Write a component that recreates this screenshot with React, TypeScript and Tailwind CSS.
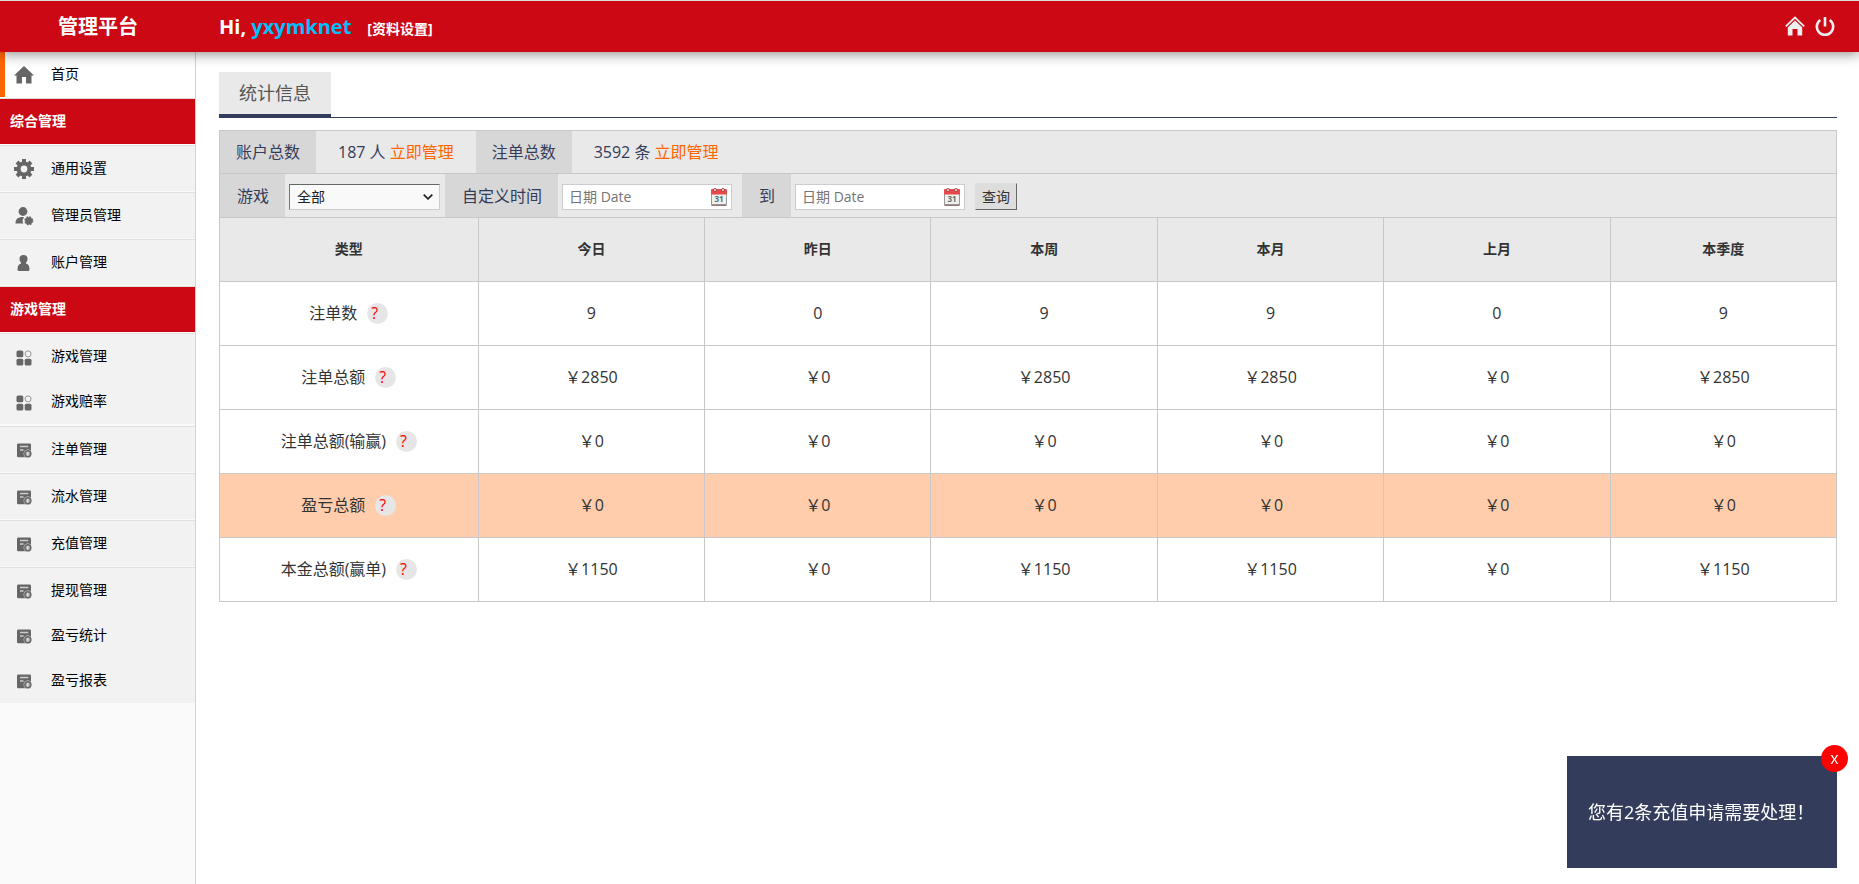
import { useState } from 'react';
import type { ReactNode } from 'react';

type MenuItem = { label: string; icon: ReactNode };
type MenuBlock = { title?: string; items?: MenuItem[] };

const HomeIcon = () => (
  <svg viewBox="0 0 20 20" className="h-5 w-5" fill="#666">
    <path d="M10 1 20 10.5H17.5V18.5H12V12H8V18.5H2.5V10.5H0Z" />
  </svg>
);

const GearIcon = () => (
  <svg viewBox="0 0 20 20" className="h-5 w-5">
    <g stroke="#666" strokeWidth="4">
      <path d="M10 0V4M10 16V20M0 10H4M16 10H20" />
      <path d="M3 3 6 6M14 14 17 17M17 3 14 6M6 14 3 17" />
    </g>
    <circle cx="10" cy="10" r="5.4" fill="none" stroke="#666" strokeWidth="4" />
  </svg>
);

const AdminIcon = () => (
  <svg viewBox="0 0 20 20" className="h-5 w-5" fill="#666">
    <circle cx="9" cy="5.5" r="4.4" />
    <path d="M1.5 17.5C1.5 13 4 11 9 11L10 11.5A5.5 5.5 0 0 0 9.3 17.5Z" />
    <circle cx="14.8" cy="14.8" r="3.6" />
    <circle cx="14.8" cy="14.8" r="3.8" fill="none" stroke="#666" strokeWidth="1.4" strokeDasharray="1.8 1.2" />
  </svg>
);

const UserIcon = () => (
  <svg viewBox="0 0 20 20" className="h-5 w-5" fill="#666">
    <circle cx="9.5" cy="6" r="4" />
    <path d="M7 8H12V10.5C14.5 11 15.5 13 15.5 16.5Q15.5 18 14 18H5Q3.5 18 3.5 16.5C3.5 13 4.5 11 7 10.5Z" />
  </svg>
);

const BlocksIcon = () => (
  <svg viewBox="0 0 20 20" className="h-5 w-5" fill="#666">
    <rect x="2.5" y="3.5" width="6.8" height="6.8" rx="1.6" />
    <rect x="2.5" y="11.7" width="6.8" height="6.8" rx="1.6" />
    <rect x="10.7" y="11.7" width="6.8" height="6.8" rx="1.6" />
    <circle cx="14.1" cy="6.9" r="3" fill="none" stroke="#999" strokeWidth="1" />
  </svg>
);

const OrderIcon = () => (
  <svg viewBox="0 0 20 20" className="h-5 w-5">
    <rect x="3" y="3.5" width="14" height="13.8" rx="1.2" fill="#666" />
    <path d="M6 6.5H14.3M6 10H9.5" stroke="#ccc" strokeWidth="1.3" />
    <circle cx="13.8" cy="13.8" r="4.2" fill="#e4e4e4" />
    <circle cx="13.8" cy="13.8" r="3" fill="#aaa" stroke="#666" strokeWidth="1.4" />
    <path d="M13.8 12V15.6" stroke="#eee" strokeWidth="1.2" />
  </svg>
);

const CalendarIcon = () => (
  <svg viewBox="0 0 16 18" className="h-[18px] w-4 shrink-0">
    <rect x="0.5" y="5" width="15" height="12.5" rx="1" fill="#eef1ef" stroke="#999" />
    <rect x="0" y="1" width="16" height="5.5" rx="1" fill="#e8474b" />
    <path d="M0.5 17H15.5" stroke="#8a6f6f" strokeWidth="1.5" />
    <circle cx="4" cy="2" r="1.6" fill="#fbb" stroke="#844" strokeWidth="0.8" />
    <circle cx="12" cy="2" r="1.6" fill="#fbb" stroke="#844" strokeWidth="0.8" />
    <text x="8" y="14" textAnchor="middle" fontSize="8" fontWeight="700" fill="#567370">31</text>
  </svg>
);

const menu: MenuBlock[] = [
  { title: '综合管理' },
  { items: [{ label: '通用设置', icon: <GearIcon /> }] },
  { items: [{ label: '管理员管理', icon: <AdminIcon /> }] },
  { items: [{ label: '账户管理', icon: <UserIcon /> }] },
  { title: '游戏管理' },
  {
    items: [
      { label: '游戏管理', icon: <BlocksIcon /> },
      { label: '游戏赔率', icon: <BlocksIcon /> },
    ],
  },
  { items: [{ label: '注单管理', icon: <OrderIcon /> }] },
  { items: [{ label: '流水管理', icon: <OrderIcon /> }] },
  { items: [{ label: '充值管理', icon: <OrderIcon /> }] },
  {
    items: [
      { label: '提现管理', icon: <OrderIcon /> },
      { label: '盈亏统计', icon: <OrderIcon /> },
      { label: '盈亏报表', icon: <OrderIcon /> },
    ],
  },
];

const columns = ['今日', '昨日', '本周', '本月', '上月', '本季度'];

const rows = [
  { label: '注单数', values: ['9', '0', '9', '9', '0', '9'] },
  { label: '注单总额', values: ['￥2850', '￥0', '￥2850', '￥2850', '￥0', '￥2850'] },
  { label: '注单总额(输赢)', values: ['￥0', '￥0', '￥0', '￥0', '￥0', '￥0'] },
  { label: '盈亏总额', values: ['￥0', '￥0', '￥0', '￥0', '￥0', '￥0'], highlight: true },
  { label: '本金总额(赢单)', values: ['￥1150', '￥0', '￥1150', '￥1150', '￥0', '￥1150'] },
];

function Header() {
  return (
    <header className="relative z-10 flex h-[52px] items-center border-t border-[#ddd] bg-[#cb0814] pr-6 font-bold text-white shadow-[0_2px_12px_rgba(0,0,0,0.45)]">
      <div className="w-[196px] shrink-0 text-center text-xl">管理平台</div>
      <div className="flex flex-1 items-baseline pl-[23px] text-xl">
        <span>Hi,&nbsp;</span>
        <span className="text-[#00c0ff]">yxymknet</span>
        <a href="#profile" className="ml-4 text-sm">[资料设置]</a>
      </div>
      <nav className="flex gap-2.5 pb-0.5">
        <a href="#home" aria-label="首页">
          <svg viewBox="0 0 20 20" className="h-5 w-5">
            <path d="M0.8 10.3 10 1.6 19.2 10.3" fill="none" stroke="#eee" strokeWidth="1.8" />
            <path d="M2.8 11.3 10 4.6 17.2 11.3V19.5H12.5V13H7.5V19.5H2.8Z" fill="#eee" />
          </svg>
        </a>
        <a href="#logout" aria-label="退出">
          <svg viewBox="0 0 20 20" className="h-5 w-5" fill="none" stroke="#eee" strokeWidth="2.6">
            <path d="M10 1V10.5" />
            <path d="M5.3 4A8.2 8.2 0 1 0 14.7 4" />
          </svg>
        </a>
      </nav>
    </header>
  );
}

function Sidebar() {
  return (
    <aside className="w-[196px] shrink-0 border-r border-[#cdd5da] bg-[#fafafa] text-sm text-black">
      <ul>
        <li className="border-b border-white bg-white">
          <a href="#index" className="flex h-[45px] items-center gap-[17px] border-l-5 border-[#f60] pl-[9px]">
            <HomeIcon />
            <span className="pb-0.5">首页</span>
          </a>
        </li>
        {menu.map((block, i) =>
          block.title ? (
            <li key={i} className="border-y border-t-[#e0e0e0] border-b-white">
              <h2 className="flex h-[45px] items-center bg-[#cb0814] pb-0.5 pl-2.5 font-bold text-white">{block.title}</h2>
            </li>
          ) : (
            <li key={i} className="border-y border-t-[#e0e0e0] border-b-[#fafafa] bg-[#f2f2f2] has-[a+a]:border-b-2">
              {block.items?.map(item => (
                <a key={item.label} href="#menu" className="flex h-[45px] items-center gap-[17px] pl-3.5">
                  {item.icon}
                  <span className="pb-0.5">{item.label}</span>
                </a>
              ))}
            </li>
          )
        )}
      </ul>
    </aside>
  );
}

function DateField({ id, label }: { id: string; label: string }) {
  return (
    <div className="mt-0.5 ml-1 flex h-[26px] w-[170px] items-center self-center border border-[#ccc] bg-white pr-1 pl-1.5">
      <input id={id} type="text" aria-label={label} placeholder="日期 Date" className="min-w-0 flex-1 text-sm outline-none placeholder:text-[#757575]" />
      <CalendarIcon />
    </div>
  );
}

function Filters() {
  return (
    <div className="border border-b-0 border-[#c8c8c8] bg-[#e9e9e9] text-[#333c5a]">
      <div className="flex h-[43px] border-b border-[#c8c8c8]">
        <span className="flex items-center bg-[#d7d7d7] px-4">账户总数</span>
        <span className="flex items-center gap-1 px-[22px]">
          187 人 <a href="#users" className="text-[#f60]">立即管理</a>
        </span>
        <span className="flex items-center bg-[#d7d7d7] px-4">注单总数</span>
        <span className="flex items-center gap-1 px-[22px]">
          3592 条 <a href="#orders" className="text-[#f60]">立即管理</a>
        </span>
      </div>
      <form className="flex h-[43px]" onSubmit={e => e.preventDefault()}>
        <label htmlFor="game" className="flex items-center bg-[#d7d7d7] pr-4 pl-[17px]">游戏</label>
        <div className="relative mt-0.5 mr-[5px] ml-1 w-[151px] self-center">
          <select id="game" className="block h-[26px] w-full appearance-none border border-[#ccc] border-t-[#666] border-l-[#777] bg-[#f9f9f9] pl-[7px] text-sm text-[#222]">
            <option>全部</option>
          </select>
          <svg viewBox="0 0 10 6" className="pointer-events-none absolute top-2.5 right-[7px] h-1.5 w-2.5" fill="none" stroke="#222" strokeWidth="1.8">
            <path d="M0.7 0.7 5 4.8 9.3 0.7" />
          </svg>
        </div>
        <label htmlFor="from" className="flex items-center bg-[#d7d7d7] pr-4 pl-[17px]">自定义时间</label>
        <DateField id="from" label="开始日期" />
        <label htmlFor="to" className="ml-2.5 flex items-center bg-[#d7d7d7] pr-4 pl-[17px]">到</label>
        <DateField id="to" label="结束日期" />
        <button type="submit" className="mt-0.5 ml-2.5 h-[27px] w-[42px] self-center border border-[#ddd] border-r-[#666] border-b-[#666] bg-[#ddd] text-sm text-[#333]">
          查询
        </button>
      </form>
    </div>
  );
}

function StatsTable() {
  return (
    <table className="w-full table-fixed border-collapse text-center text-[#333]">
      <thead>
        <tr className="h-16 bg-[#e9e9e9] text-sm">
          <th className="w-[16%] border border-[#c8c8c8] pb-0.5">类型</th>
          {columns.map(column => (
            <th key={column} className="w-[14%] border border-[#c8c8c8] pb-0.5">{column}</th>
          ))}
        </tr>
      </thead>
      <tbody>
        {rows.map(row => (
          <tr key={row.label} className={`h-16 ${row.highlight ? 'bg-[#ffcdab]' : 'bg-white'}`}>
            <td className="border border-[#c8c8c8]">
              <div className="flex items-center justify-center gap-2.5">
                <span className="pb-0.5">{row.label}</span>
                <span className="h-[21px] w-[21px] rounded-full bg-[#e6e6e6] pl-1 text-left leading-5 text-[#f00]">?</span>
              </div>
            </td>
            {row.values.map((value, i) => (
              <td key={i} className="border border-[#c8c8c8] pb-0.5">{value}</td>
            ))}
          </tr>
        ))}
      </tbody>
    </table>
  );
}

export default function App() {
  const [showNotice, setShowNotice] = useState(true);

  return (
    <div className="flex min-h-screen flex-col bg-white font-['Open_Sans','Noto_Sans_CJK_SC',sans-serif]">
      <Header />
      <div className="flex flex-1">
        <Sidebar />
        <main className="min-w-0 flex-1 pt-5 pr-[22px] pl-[23px]">
          <div className="mb-3 flex border-b border-[#333c5a]">
            <h1 className="-mb-px flex h-[46px] items-center border-b-4 border-[#333c5a] bg-[#e9e9e9] px-5 text-lg text-[#555]">统计信息</h1>
          </div>
          <Filters />
          <StatsTable />
        </main>
      </div>

      {showNotice && (
        <div className="fixed right-[22px] bottom-4 flex h-28 w-[270px] items-center bg-[#333c5a] pl-[21px] text-lg text-white">
          您有2条充值申请需要处理！
          <button
            type="button"
            onClick={() => setShowNotice(false)}
            className="absolute -top-[11px] -right-[11px] h-[27px] w-[27px] rounded-full bg-[#f00] text-base leading-[27px]"
          >
            x
          </button>
        </div>
      )}
    </div>
  );
}
